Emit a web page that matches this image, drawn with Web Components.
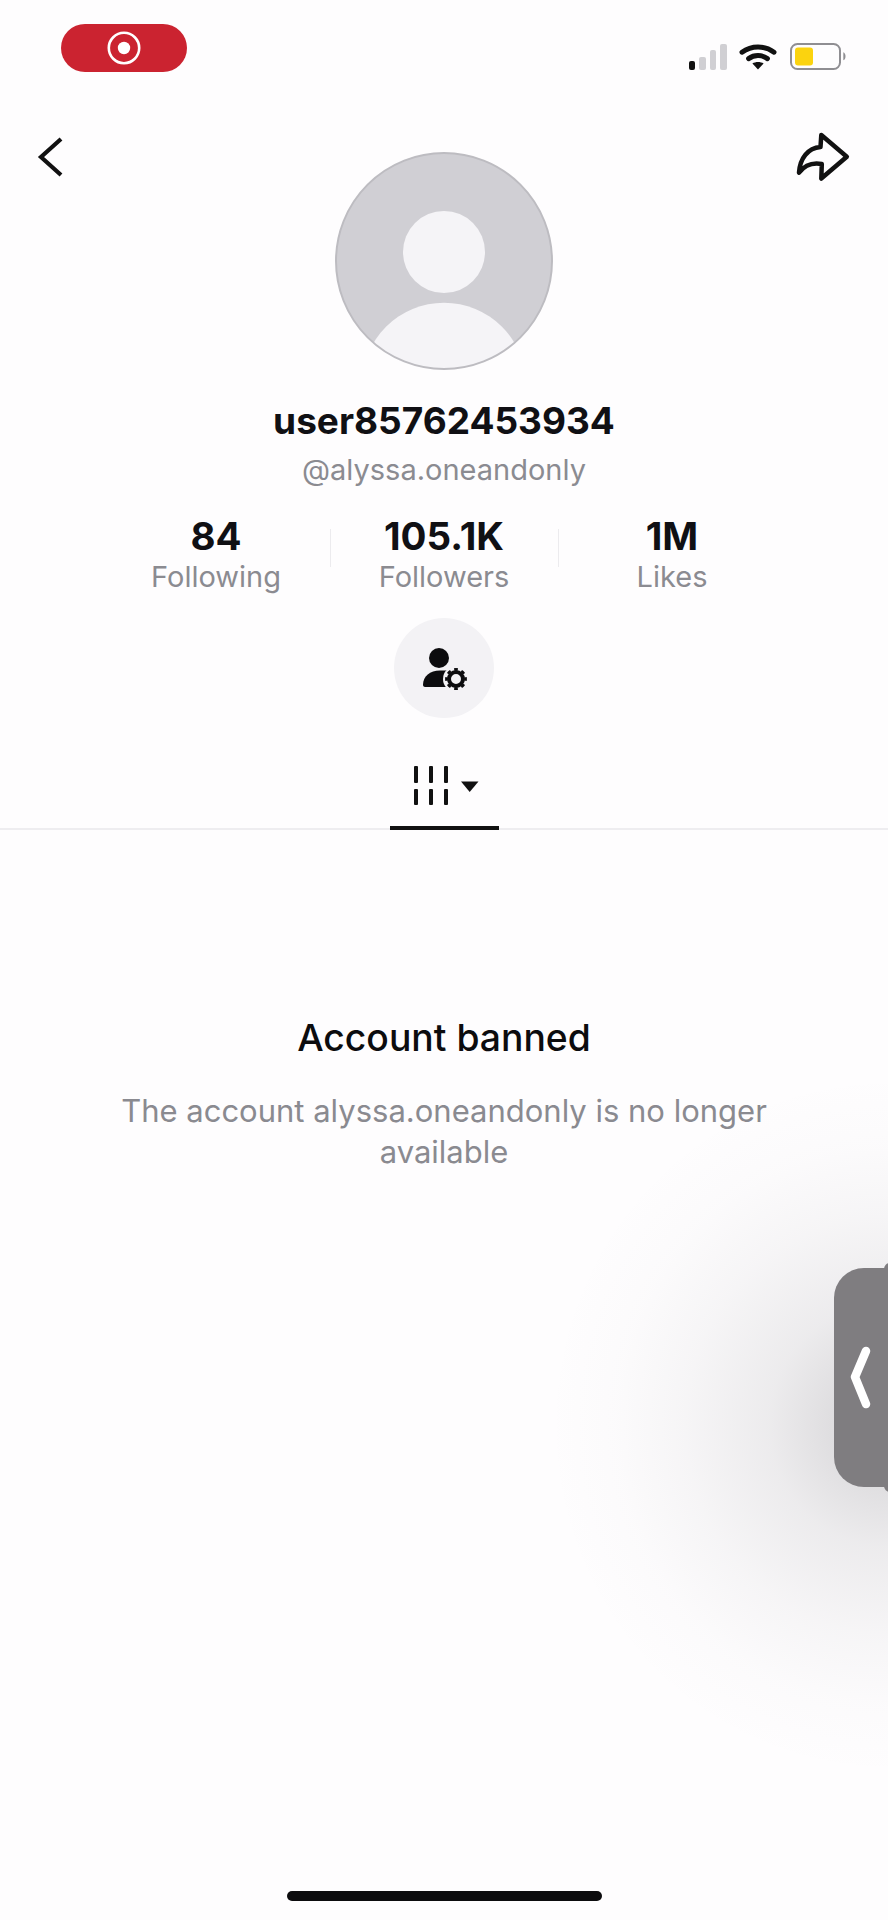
<!DOCTYPE html>
<html lang="en">
<head>
<meta charset="utf-8">
<title>Profile</title>
<style>
  html, body { margin: 0; padding: 0; background: #fefdfe; }
  body { font-family: Inter, "Liberation Sans", sans-serif; }
</style>
</head>
<body>
<profile-page>
  <status-bar slot="status"></status-bar>
  <profile-header slot="header" name="user85762453934" handle="@alyssa.oneandonly"></profile-header>
  <stat-row slot="stats">
    <stat-item value="84">Following</stat-item>
    <stat-item value="105.1K" divided>Followers</stat-item>
    <stat-item value="1M" divided>Likes</stat-item>
  </stat-row>
  <suggest-button slot="action"></suggest-button>
  <video-tabs slot="tabs"></video-tabs>
  <banned-notice slot="notice" heading="Account banned">The account alyssa.oneandonly is no longer available</banned-notice>
  <side-glow slot="overlay"></side-glow>
  <side-handle slot="overlay"></side-handle>
  <home-indicator slot="overlay"></home-indicator>
</profile-page>

<script>
// small helper so each component stays a few lines
function shadow(el, html) {
  const root = el.attachShadow({ mode: 'open' });
  root.innerHTML = html;
  return root;
}

class ProfilePage extends HTMLElement {
  constructor() {
    super();
    shadow(this, `
      <style>
        :host {
          display: flex;
          flex-direction: column;
          position: relative;
          width: 888px;
          height: 1920px;
          overflow: hidden;
          background: #fefdfe;
        }
      </style>
      <slot name="status"></slot>
      <slot name="header"></slot>
      <slot name="stats"></slot>
      <slot name="action"></slot>
      <slot name="tabs"></slot>
      <slot name="notice"></slot>
      <slot name="overlay"></slot>
    `);
  }
}

class StatusBar extends HTMLElement {
  constructor() {
    super();
    shadow(this, `
      <style>
        :host {
          display: flex;
          justify-content: space-between;
          align-items: flex-start;
          box-sizing: border-box;
          height: 133px;
          padding: 24px 41px 0 61px;
        }
        .rec {
          display: flex;
          align-items: center;
          justify-content: center;
          width: 126px;
          height: 48px;
          border-radius: 24px;
          background: #cb2330;
        }
        .icons {
          display: flex;
          align-items: flex-end;
          margin-top: 19px;
        }
        .bars { display: flex; align-items: flex-end; gap: 4px; height: 26px; margin-right: 12px; }
        .bars i { display: block; width: 6.6px; border-radius: 2px; background: #d0cfd3; }
        .bars i:first-child { background: #111; }
        .batt { margin-left: 13px; }
        svg { display: block; }
      </style>
      <div class="rec">
        <svg width="34" height="34" viewBox="0 0 34 34">
          <circle cx="17" cy="17" r="15.2" fill="none" stroke="#fff" stroke-width="2.6"/>
          <circle cx="17" cy="17" r="6.2" fill="#fff"/>
        </svg>
      </div>
      <div class="icons">
        <div class="bars">
          <i style="height:9px"></i><i style="height:13px"></i><i style="height:20px"></i><i style="height:26px"></i>
        </div>
        <svg width="38" height="27" viewBox="0 0 38 27">
          <path d="M3 9.2C12.5 2.2 25.5 2.2 35 9.2" fill="none" stroke="#111" stroke-width="5" stroke-linecap="round"/>
          <path d="M9.6 15.6C15.2 11.6 22.8 11.6 28.4 15.6" fill="none" stroke="#111" stroke-width="5" stroke-linecap="round"/>
          <path d="M13.4 20.6C16.4 18.6 21.6 18.6 24.6 20.6L19 26.6Z" fill="#111"/>
        </svg>
        <svg class="batt" width="57" height="27" viewBox="0 0 57 27">
          <rect x="1" y="1" width="49" height="25" rx="6.5" fill="none" stroke="#8f8e92" stroke-width="2"/>
          <rect x="5" y="4.5" width="18" height="18" rx="3" fill="#fbd30f"/>
          <path d="M53.300 9.300C56 10 56.500 16.500 53.300 17.200Z" fill="#8f8e92"/>
        </svg>
      </div>
    `);
  }
}

class ProfileHeader extends HTMLElement {
  constructor() {
    super();
    shadow(this, `
      <style>
        :host {
          display: block;
        }
        .top {
          display: grid;
          grid-template-columns: 1fr 218px 1fr;
          align-items: start;
        }
        .back { margin: 2px 0 0 36px; }
        .share { justify-self: end; margin: -3px 37px 0 0; }
        .avatar { margin-top: 19px; }
        svg { display: block; }
        .name {
          margin-top: 29px;
          text-align: center;
          font: 700 37px/44px Inter, "Liberation Sans", sans-serif;
          color: #101014;
        }
        .handle {
          margin-top: 10px;
          text-align: center;
          font: 400 29px/34px Inter, "Liberation Sans", sans-serif;
          color: #8b8b91;
        }
      </style>
      <div class="top">
        <svg class="back" width="30" height="44" viewBox="0 0 30 44">
          <path d="M25 4L5 22L25 40" fill="none" stroke="#111" stroke-width="4.2"/>
        </svg>
        <svg class="avatar" width="218" height="218" viewBox="0 0 218 218">
          <defs><clipPath id="c"><circle cx="109" cy="109" r="108"/></clipPath></defs>
          <circle cx="109" cy="109" r="108" fill="#d0cfd4"/>
          <circle cx="109" cy="100" r="41" fill="#f5f4f7"/>
          <g clip-path="url(#c)"><circle cx="109" cy="232.700" r="82" fill="#f5f4f7"/></g>
          <circle cx="109" cy="109" r="108" fill="none" stroke="#bdbcc1" stroke-width="2"/>
        </svg>
        <svg class="share" width="56" height="54" viewBox="0 0 56 54">
          <path d="M26.3 5L51.800 26.700L26.300 48.500L26.800 34C16 32 9 36 4 42.700C5 28 13 18 25.500 17Z" fill="none" stroke="#111" stroke-width="4.500" stroke-linejoin="round"/>
        </svg>
      </div>
      <div class="name">${this.getAttribute('name')}</div>
      <div class="handle">${this.getAttribute('handle')}</div>
    `);
  }
}

class StatRow extends HTMLElement {
  constructor() {
    super();
    shadow(this, `
      <style>
        :host {
          display: grid;
          grid-template-columns: repeat(3, 228px);
          justify-content: center;
          margin-top: 27px;
        }
      </style>
      <slot></slot>
    `);
  }
}

class StatItem extends HTMLElement {
  constructor() {
    super();
    shadow(this, `
      <style>
        :host {
          display: flex;
          flex-direction: column;
          align-items: center;
          position: relative;
        }
        :host([divided])::before {
          content: "";
          position: absolute;
          left: 0;
          top: 15px;
          width: 1px;
          height: 38px;
          background: #ecebee;
        }
        .value {
          font: 700 38.5px/44px Inter, "Liberation Sans", sans-serif;
          color: #101014;
        }
        .label {
          margin-top: 2px;
          font: 400 29px/34px Inter, "Liberation Sans", sans-serif;
          color: #8b8b91;
        }
      </style>
      <div class="value">${this.getAttribute('value')}</div>
      <div class="label"><slot></slot></div>
    `);
  }
}

class SuggestButton extends HTMLElement {
  constructor() {
    super();
    shadow(this, `
      <style>
        :host {
          display: flex;
          align-items: center;
          justify-content: center;
          align-self: center;
          width: 100px;
          height: 100px;
          margin: 24px auto 0;
          border-radius: 50%;
          background: #f3f2f5;
        }
        svg { display: block; }
      </style>
      <svg width="48" height="48" viewBox="0 0 48 48">
        <circle cx="19" cy="14" r="10" fill="#0c0c0e"/>
        <path d="M3 41C3 32 10 26.500 20 26.500H28V43H5C4 43 3 42 3 41Z" fill="#0c0c0e"/>
        <circle cx="36" cy="35" r="13" fill="#f3f2f5"/>
        <circle cx="36" cy="35" r="7" fill="none" stroke="#0c0c0e" stroke-width="4"/>
        <circle cx="36" cy="35" r="9.600" fill="none" stroke="#0c0c0e" stroke-width="2.600" pathLength="16" stroke-dasharray="1 1" stroke-dashoffset="0.500"/>
      </svg>
    `);
  }
}

class VideoTabs extends HTMLElement {
  constructor() {
    super();
    shadow(this, `
      <style>
        :host {
          display: block;
          margin-top: 46px;
          border-bottom: 2px solid #eeedf0;
        }
        .tab {
          box-sizing: border-box;
          display: flex;
          align-items: flex-start;
          justify-content: center;
          width: 109px;
          height: 66px;
          margin: 0 auto -2px;
          padding: 1.5px 0 0 4px;
          border-bottom: 4px solid #111;
        }
        svg { display: block; }
      </style>
      <div class="tab">
        <svg width="66" height="40" viewBox="0 0 66 40">
          <g fill="#111">
            <rect x="1" y="0" width="4" height="17" rx="1"/><rect x="16" y="0" width="4" height="17" rx="1"/><rect x="31" y="0" width="4" height="17" rx="1"/>
            <rect x="1" y="23" width="4" height="16" rx="1"/><rect x="16" y="23" width="4" height="16" rx="1"/><rect x="31" y="23" width="4" height="16" rx="1"/>
            <path d="M48 15.500H65.500L56.700 26Z"/>
          </g>
        </svg>
      </div>
    `);
  }
}

class BannedNotice extends HTMLElement {
  constructor() {
    super();
    shadow(this, `
      <style>
        :host {
          display: block;
          margin-top: 186px;
          padding: 0 110px;
          text-align: center;
        }
        h2 {
          margin: 0;
          font: 500 37.3px/44px Inter, "Liberation Sans", sans-serif;
          color: #0c0c0e;
        }
        p {
          margin: 30px 0 0;
          font: 400 31px/41px Inter, "Liberation Sans", sans-serif;
          color: #8a8a90;
        }
      </style>
      <h2>${this.getAttribute('heading')}</h2>
      <p><slot></slot></p>
    `);
  }
}

// soft shade the floating tab casts on the page, see-through so text stays readable
class SideGlow extends HTMLElement {
  constructor() {
    super();
    shadow(this, `
      <style>
        :host {
          position: absolute;
          left: 548px;
          top: 1075px;
          width: 680px;
          height: 700px;
          pointer-events: none;
          background: radial-gradient(ellipse closest-side at center,
            rgba(100,98,105,.2) 0%, rgba(100,98,105,.2) 17%, rgba(100,98,105,.115) 35%,
            rgba(100,98,105,.05) 60%, rgba(100,98,105,.015) 80%, rgba(100,98,105,0) 100%);
        }
      </style>
    `);
  }
}

// assistive touch tab on the right edge, floats over the page
class SideHandle extends HTMLElement {
  constructor() {
    super();
    shadow(this, `
      <style>
        :host {
          position: absolute;
          left: 834px;
          top: 1268px;
          width: 80px;
          height: 219px;
          box-sizing: border-box;
          padding: 78px 0 0 15px;
          border-radius: 30px;
          background: #7f7d80;
        }
        :host::after {
          content: "";
          position: absolute;
          left: 50px;
          top: -5px;
          width: 12px;
          height: 229px;
          border-radius: 6px;
          background: #7f7d80;
        }
        svg { display: block; position: relative; z-index: 1; }
      </style>
      <svg width="26" height="68" viewBox="0 0 26 68">
        <path d="M17 5L6 31L17 58" fill="none" stroke="#fff" stroke-width="8.500" stroke-linecap="round" stroke-linejoin="round"/>
      </svg>
    `);
  }
}

class HomeIndicator extends HTMLElement {
  constructor() {
    super();
    shadow(this, `
      <style>
        :host {
          position: absolute;
          left: 287px;
          top: 1891px;
          width: 315px;
          height: 10px;
          border-radius: 5px;
          background: #0c0c0e;
        }
      </style>
    `);
  }
}

customElements.define('profile-page', ProfilePage);
customElements.define('status-bar', StatusBar);
customElements.define('profile-header', ProfileHeader);
customElements.define('stat-row', StatRow);
customElements.define('stat-item', StatItem);
customElements.define('suggest-button', SuggestButton);
customElements.define('video-tabs', VideoTabs);
customElements.define('banned-notice', BannedNotice);
customElements.define('side-glow', SideGlow);
customElements.define('side-handle', SideHandle);
customElements.define('home-indicator', HomeIndicator);
</script>
</body>
</html>
